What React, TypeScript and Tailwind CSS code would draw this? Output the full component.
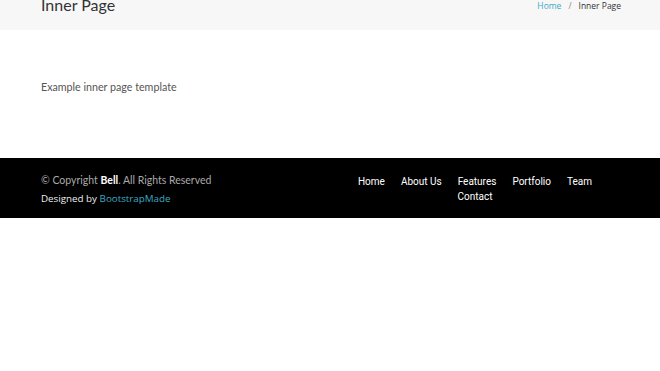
import React from 'react';

const navItems = ['Home', 'About Us', 'Features', 'Portfolio', 'Team', 'Contact'];

const App: React.FC = () => {
  return (
    <div className="w-[660px] min-h-[371px] bg-white font-['Lato',sans-serif]">
      {/* Breadcrumbs */}
      <section className="h-[30px] bg-[#f7f7f7] pl-[41px] pr-[39px] flex items-start justify-between">
        <h2 className="text-[16px] leading-[16px] -mt-[3px] text-[#333] font-normal">Inner Page</h2>
        <ol className="flex items-center gap-[7px] pt-[1px] text-[8.5px] leading-[10px] font-['Open_Sans',sans-serif] text-[#333]">
          <li className="text-[#3ca9c4]">Home</li>
          <li className="text-[#888]">/</li>
          <li>Inner Page</li>
        </ol>
      </section>

      {/* Content */}
      <section className="px-[41px] pt-[50px] h-[128px]">
        <p className="text-[10.7px] leading-[14px] text-[#555]">Example inner page template</p>
      </section>

      {/* Footer */}
      <footer className="bg-black h-[60px] pl-[41px] flex">
        <div className="w-[289px] pt-[15px]">
          <div className="text-[10.5px] leading-[14px] text-[#aaa]">
            &copy; Copyright <strong className="text-white font-bold">Bell</strong>. All Rights Reserved
          </div>
          <div className="mt-[4px] pt-[1px] text-[9.8px] leading-[14px] text-[#eee] font-medium font-['Open_Sans',sans-serif]">
            Designed by <span className="text-[#3ca9c4]">BootstrapMade</span>
          </div>
        </div>
        <nav className="w-[290px] pt-[16px]">
          <ul className="flex flex-wrap justify-center font-['Roboto',sans-serif] text-[10px] leading-[15px] text-white">
            {navItems.map((item) => (
              <li key={item} className="px-[8px]">{item}</li>
            ))}
          </ul>
        </nav>
      </footer>
    </div>
  );
};

export default App;
